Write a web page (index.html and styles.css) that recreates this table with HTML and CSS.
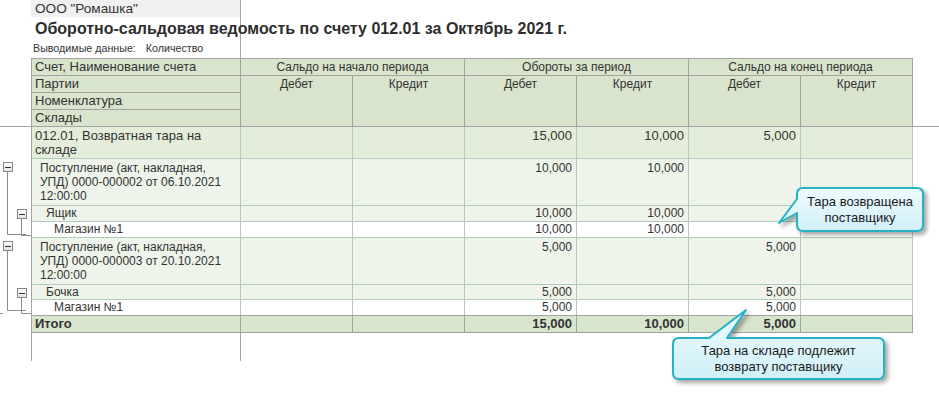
FILE: index.html
```html
<!DOCTYPE html>
<html lang="ru">
<head>
<meta charset="utf-8">
<title>Оборотно-сальдовая ведомость</title>
<link rel="stylesheet" href="styles.css">
</head>
<body>
<div class="page">
  <div class="top">
    <div class="company">ООО "Ромашка"</div>
    <div class="title">Оборотно-сальдовая ведомость по счету 012.01 за Октябрь 2021 г.</div>
    <div class="params"><span>Выводимые данные:</span><span class="pv">Количество</span></div>
  </div>

  <div class="hband">
    <div class="hgrid">
      <div class="hc c1 r1">Счет, Наименование счета</div>
      <div class="hc grp g1">Сальдо на начало периода</div>
      <div class="hc grp g2">Обороты за период</div>
      <div class="hc grp g3">Сальдо на конец периода</div>
      <div class="hc c1 r2">Партии</div>
      <div class="hc c1 r3">Номенклатура</div>
      <div class="hc c1 r4 nb">Склады</div>
      <div class="hc sub s2">Дебет</div>
      <div class="hc sub s3">Кредит</div>
      <div class="hc sub s4">Дебет</div>
      <div class="hc sub s5">Кредит</div>
      <div class="hc sub s6">Дебет</div>
      <div class="hc sub s7">Кредит</div>
    </div>
  </div>

  <div class="body">
    <svg class="tree" width="31" height="234" viewBox="0 0 31 234">
      <defs>
        <linearGradient id="bx" x1="0" y1="0" x2="0" y2="1">
          <stop offset="0" stop-color="#ffffff"/>
          <stop offset="1" stop-color="#e4e4dc"/>
        </linearGradient>
      </defs>
      <g fill="none" stroke="#8c8c8c" stroke-width="1">
        <path d="M7.5 44 V107.5 H26"/>
        <path d="M21.5 91 V108.5 H31"/>
        <path d="M7.5 123 V183.5 H26"/>
        <path d="M21.5 170 V186.5 H31"/>
        <path d="M0 186.5 H3"/>
      </g>
      <g stroke="#858585" fill="url(#bx)">
        <rect x="3.5" y="35.5" width="9" height="9"/>
        <rect x="17.5" y="82.5" width="9" height="9"/>
        <rect x="3.5" y="114.5" width="9" height="9"/>
        <rect x="17.5" y="161.5" width="9" height="9"/>
      </g>
      <g stroke="#333" stroke-width="1">
        <path d="M5 40.5 H11"/>
        <path d="M19 87.5 H25"/>
        <path d="M5 119.5 H11"/>
        <path d="M19 166.5 H25"/>
      </g>
    </svg>

    <div class="data">
      <div class="row acc h2">
        <div class="dc l0">012.01, Возвратная тара на складе</div>
        <div class="dc num"></div><div class="dc num"></div>
        <div class="dc num">15,000</div><div class="dc num">10,000</div>
        <div class="dc num">5,000</div><div class="dc num"></div>
      </div>
      <div class="row doc h3">
        <div class="dc l1">Поступление (акт, накладная, УПД) 0000-000002 от 06.10.2021 12:00:00</div>
        <div class="dc num"></div><div class="dc num"></div>
        <div class="dc num">10,000</div><div class="dc num">10,000</div>
        <div class="dc num"></div><div class="dc num"></div>
      </div>
      <div class="row doc h1">
        <div class="dc l2">Ящик</div>
        <div class="dc num"></div><div class="dc num"></div>
        <div class="dc num">10,000</div><div class="dc num">10,000</div>
        <div class="dc num"></div><div class="dc num"></div>
      </div>
      <div class="row wh h1">
        <div class="dc l3">Магазин №1</div>
        <div class="dc num"></div><div class="dc num"></div>
        <div class="dc num">10,000</div><div class="dc num">10,000</div>
        <div class="dc num"></div><div class="dc num"></div>
      </div>
      <div class="row doc h3">
        <div class="dc l1">Поступление (акт, накладная, УПД) 0000-000003 от 20.10.2021 12:00:00</div>
        <div class="dc num"></div><div class="dc num"></div>
        <div class="dc num">5,000</div><div class="dc num"></div>
        <div class="dc num">5,000</div><div class="dc num"></div>
      </div>
      <div class="row doc h1s">
        <div class="dc l2">Бочка</div>
        <div class="dc num"></div><div class="dc num"></div>
        <div class="dc num">5,000</div><div class="dc num"></div>
        <div class="dc num">5,000</div><div class="dc num"></div>
      </div>
      <div class="row wh h1 before-total">
        <div class="dc l3">Магазин №1</div>
        <div class="dc num"></div><div class="dc num"></div>
        <div class="dc num">5,000</div><div class="dc num"></div>
        <div class="dc num">5,000</div><div class="dc num"></div>
      </div>
      <div class="row total">
        <div class="dc l0">Итого</div>
        <div class="dc num"></div><div class="dc num"></div>
        <div class="dc num">15,000</div><div class="dc num">10,000</div>
        <div class="dc num">5,000</div><div class="dc num"></div>
      </div>
      <div class="filler"></div>
    </div>
  </div>

  <svg class="callouts" width="939" height="395" viewBox="0 0 939 395">
    <defs>
      <linearGradient id="cf" x1="0" y1="0" x2="0" y2="1">
        <stop offset="0" stop-color="#effcfe"/>
        <stop offset="1" stop-color="#cfeff7"/>
      </linearGradient>
      <filter id="sh" x="-20%" y="-40%" width="140%" height="180%">
        <feDropShadow dx="3" dy="3" stdDeviation="2" flood-color="#000" flood-opacity="0.35"/>
      </filter>
    </defs>
    <path filter="url(#sh)" fill="url(#cf)" stroke="#26b1c4" stroke-width="2" stroke-linejoin="round"
      d="M803 188 H917 Q923 188 923 194 V225 Q923 231 917 231 H803 Q797 231 797 225 V213 L779 223 L797 199 V194 Q797 188 803 188 Z"/>
    <path filter="url(#sh)" fill="url(#cf)" stroke="#26b1c4" stroke-width="2" stroke-linejoin="round"
      d="M679 338 H709 L746 310 L727 338 H878 Q884 338 884 344 V373 Q884 379 878 379 H679 Q673 379 673 373 V344 Q673 338 679 338 Z"/>
  </svg>
  <div class="note n1">Тара возвращена<br>поставщику</div>
  <div class="note n2">Тара на складе подлежит<br>возврату поставщику</div>
</div>
</body>
</html>
```

FILE: styles.css
```css
* { box-sizing: border-box; }
html, body { margin: 0; padding: 0; background: #fff; }
body {
  font-family: "Liberation Sans", Arial, sans-serif;
  font-size: 13px;
  color: #333;
}
.page {
  position: relative;
  width: 939px;
  height: 395px;
  overflow: hidden;
}

/* top block */
.top {
  margin-left: 31px;
  width: 210px;
  height: 58px;
  border-right: 1px solid #a6a6a6;
  white-space: nowrap;
}
.company {
  height: 17px;
  line-height: 17px;
  font-size: 13.6px;
  padding-left: 4px;
  background: #f0f0f0;
  color: #333;
}
.title {
  height: 23px;
  line-height: 24px;
  font-size: 16px;
  font-weight: bold;
  padding-left: 4px;
  color: #2e2e2e;
}
.params {
  height: 18px;
  line-height: 17px;
  font-size: 10.7px;
  padding-left: 2px;
  color: #333;
}
.params .pv { margin-left: 10px; }

/* header */
.hband { border-bottom: 1px solid #a3a3a3; }
.hgrid {
  margin-left: 31px;
  width: 882px;
  display: grid;
  grid-template-columns: 209px repeat(6, 112px);
  grid-template-rows: 17px 17px 17px 16px;
  border-left: 1px solid #a3a3a3;
  border-top: 1px solid #a3a3a3;
  background: #d8e4cb;
}
.hc {
  border-right: 1px solid #a3a3a3;
  line-height: 16px;
  white-space: nowrap;
  color: #333;
}
.c1 { grid-column: 1; padding-left: 3px; border-bottom: 1px solid #a3a3a3; font-size: 13px; }
.c1.nb { border-bottom: none; }
.r1 { grid-row: 1; }
.r2 { grid-row: 2; }
.r3 { grid-row: 3; }
.r4 { grid-row: 4; }
.grp { grid-row: 1; text-align: center; border-bottom: 1px solid #a3a3a3; font-size: 12px; }
.g1 { grid-column: 2 / 4; }
.g2 { grid-column: 4 / 6; }
.g3 { grid-column: 6 / 8; }
.sub { grid-row: 2 / 5; text-align: center; font-size: 12px; }
.s2 { grid-column: 2; }
.s3 { grid-column: 3; }
.s4 { grid-column: 4; }
.s5 { grid-column: 5; }
.s6 { grid-column: 6; }
.s7 { grid-column: 7; }

/* body */
.body { display: flex; align-items: flex-start; }
.tree { display: block; flex: none; }
.data {
  width: 882px;
  border-left: 1px solid #a3a3a3;
}
.row {
  display: grid;
  grid-template-columns: 209px repeat(6, 112px);
  border-bottom: 1px solid #b1ccbf;
}
.row.h1 { height: 16px; }
.row.h1s { height: 15px; }
.row.h2 { height: 32px; }
.row.h3 { height: 47px; }
.row.acc { background: #e4edda; font-size: 13px; }
.row.doc { background: #eef4ea; font-size: 12px; }
.row.wh { background: #ffffff; font-size: 12px; }
.row.before-total { border-bottom-color: #a3a3a3; }
.row.total {
  height: 17px;
  background: #d8e4cb;
  border-bottom-color: #a3a3a3;
  font-weight: bold;
  font-size: 13px;
}
.dc {
  border-right: 1px solid #b1ccbf;
  line-height: 15px;
  color: #333;
  overflow: hidden;
}
.row.h2 .dc, .row.h3 .dc { line-height: 14px; padding-top: 2px; }
.row.total .dc { border-right-color: #a3a3a3; }
.dc.l0 { padding-left: 3px; padding-right: 8px; }
.dc.l1 { padding-left: 8px; padding-right: 8px; }
.dc.l2 { padding-left: 14px; padding-right: 8px; }
.dc.l3 { padding-left: 22px; padding-right: 8px; }
.dc.num { text-align: right; padding-right: 4px; }

.filler {
  width: 209px;
  height: 28px;
  border-right: 1px solid #a3a3a3;
}

/* callouts */
.callouts {
  position: absolute;
  left: 0;
  top: 0;
  pointer-events: none;
}
.note {
  position: absolute;
  display: flex;
  align-items: center;
  justify-content: center;
  text-align: center;
  font-size: 13px;
  line-height: 16px;
  color: #1a1a1a;
}
.n1 { left: 797px; top: 188px; width: 126px; height: 43px; }
.n2 { left: 673px; top: 338px; width: 211px; height: 41px; }
```
